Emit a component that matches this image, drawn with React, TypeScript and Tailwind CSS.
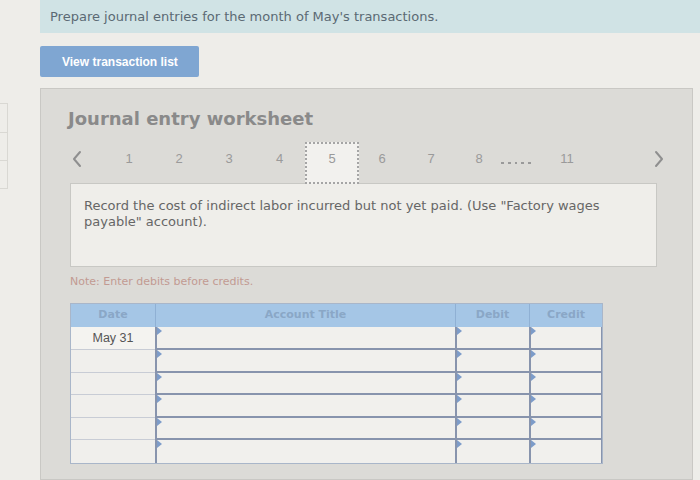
import React from "react";

const rows = [23, 23, 22, 23, 22, 23];

function Flag() {
  return (
    <span className="absolute left-0 top-0 h-0 w-0 border-t-[4px] border-b-[4px] border-l-[5px] border-t-transparent border-b-transparent border-l-[#7d9cc9]" />
  );
}

function Chevron({ dir }: { dir: "left" | "right" }) {
  return (
    <svg width="12" height="18" viewBox="0 0 12 18" fill="none">
      <path
        d={dir === "left" ? "M9 2 L3 9 L9 16" : "M3 2 L9 9 L3 16"}
        stroke="#8f8f8f"
        strokeWidth="2"
        strokeLinecap="round"
        strokeLinejoin="round"
      />
    </svg>
  );
}

export default function App() {
  const num = "text-[13px] text-[#9a9a9a] text-center font-['Liberation_Sans',Arial,sans-serif]";
  return (
    <div className="flex h-[480px] w-[700px] overflow-hidden bg-[#eeede9] font-['DejaVu_Sans',Verdana,sans-serif]">
      {/* left gutter */}
      <div className="w-[40px] shrink-0 pt-[103px]">
        <div className="w-[8px] border-r border-[#d9d8d3]">
          <div className="h-[29px] border-t border-[#d9d8d3]" />
          <div className="h-[28px] border-t border-[#d9d8d3]" />
          <div className="h-[29px] border-t border-b border-[#d9d8d3]" />
        </div>
      </div>

      <div className="flex flex-1 flex-col">
        {/* banner */}
        <div className="flex h-[33px] items-center bg-[#d0e3e5] pl-[10px] text-[13px] text-[#5b6a74]">
          Prepare journal entries for the month of May's transactions.
        </div>

        {/* button */}
        <div className="mt-[13px] flex h-[31px] w-[159px] items-center rounded-[2px] bg-[#7fa6d2] pl-[22px] font-['Liberation_Sans',Arial,sans-serif] text-[12px] font-bold text-white">
          View transaction list
        </div>

        {/* panel */}
        <div className="mt-[11px] mr-[7px] flex-1 border border-[#c9c8c4] bg-[#dcdbd7] pl-[29px] pt-[19px]">
          <div className="-ml-[2px] h-[22px] text-[18px] font-bold leading-[22px] text-[#8a8a8a]">
            Journal entry worksheet
          </div>

          {/* nav */}
          <div className="mt-[12px] flex h-[42px] items-center">
            <div className="mb-[8px] flex w-[34px] pl-[1px]">
              <Chevron dir="left" />
            </div>
            <div className={`mb-[8px] w-[50px] ${num}`}>1</div>
            <div className={`mb-[8px] w-[50px] ${num}`}>2</div>
            <div className={`mb-[8px] w-[50px] ${num}`}>3</div>
            <div className={`mb-[8px] w-[51px] ${num}`}>4</div>
            <div className={`flex h-[42px] w-[54px] items-center justify-center border-2 border-dotted border-[#a5a5a5] bg-[#f2f1ee] pb-[8px] ${num} text-[#7a7a7a]`}>
              5
            </div>
            <div className={`mb-[8px] w-[46px] ${num}`}>6</div>
            <div className={`mb-[8px] w-[52px] ${num}`}>7</div>
            <div className={`mb-[8px] w-[44px] ${num}`}>8</div>
            <div className="flex w-[30px] items-center gap-[4px]">
              {[0, 1, 2, 3, 4].map((i) => (
                <span key={i} className="h-[2px] w-[3px] bg-[#9a9a9a]" />
              ))}
            </div>
            <div className={`mb-[8px] w-[72px] ${num}`}>11</div>
            <div className="mb-[8px] pl-[50px]">
              <Chevron dir="right" />
            </div>
          </div>

          {/* instruction */}
          <div className="-mt-[1px] h-[84px] w-[587px] border border-[#c8c8c4] bg-[#efeeea] pl-[13px] pt-[14px] text-[13px] leading-[16px] text-[#666]">
            Record the cost of indirect labor incurred but not yet paid. (Use "Factory wages
            <br />
            payable" account).
          </div>

          {/* note */}
          <div className="mt-[7px] h-[15px] text-[11px] leading-[15px] text-[#c29a92]">
            Note: Enter debits before credits.
          </div>

          {/* table */}
          <div className="mt-[14px] w-[533px] border border-[#a9b6c9] bg-[#f0efec]">
            <div className="grid h-[23px] grid-cols-[84px_300px_74px_73px] bg-[#a5c6e6] text-[11px] font-bold text-[#8aa7c6]">
              <div className="flex items-center justify-center">Date</div>
              <div className="flex items-center justify-center border-l border-[#8fb0d4]">Account Title</div>
              <div className="flex items-center justify-center border-l border-[#8fb0d4]">Debit</div>
              <div className="flex items-center justify-center border-l border-[#8fb0d4]">Credit</div>
            </div>
            {rows.map((h, i) => (
              <div
                key={i}
                className="grid grid-cols-[84px_300px_74px_73px]"
                style={{ height: h }}
              >
                <div
                  className={`flex items-center justify-center font-['Liberation_Sans',Arial,sans-serif] text-[12.5px] text-[#555] ${
                    i < rows.length - 1 ? "border-b border-[#c8ccd5]" : ""
                  } ${i === 0 ? "bg-[#f4f3f0]" : ""}`}
                >
                  {i === 0 ? "May 31" : ""}
                </div>
                {[0, 1, 2].map((c) => (
                  <div
                    key={c}
                    className={`relative border-l-2 border-[#8894ad] ${
                      i < rows.length - 1 ? "border-b-2" : ""
                    } ${c === 2 ? "border-r" : ""} bg-[#f1f0ed]`}
                  >
                    <Flag />
                  </div>
                ))}
              </div>
            ))}
          </div>
        </div>
      </div>
    </div>
  );
}
